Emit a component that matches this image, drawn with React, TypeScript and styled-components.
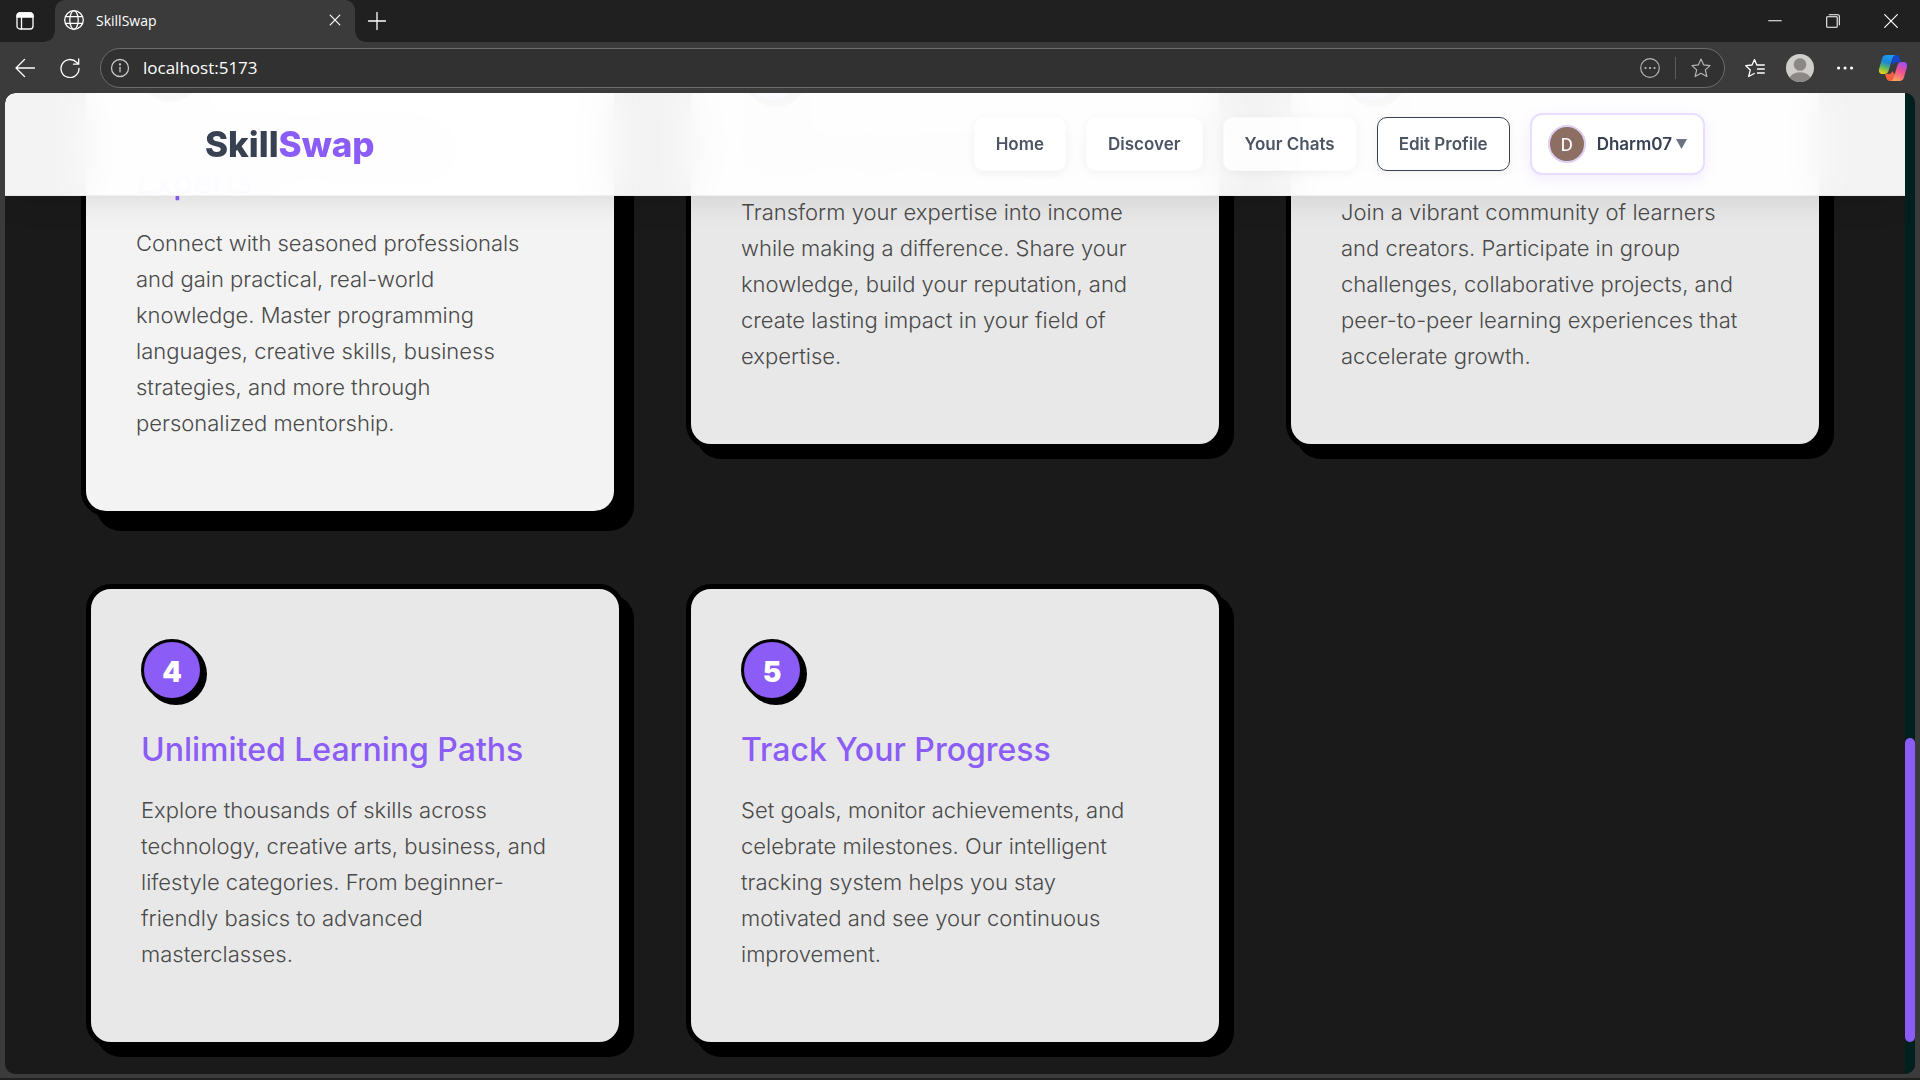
import React from "react";
import styled, { createGlobalStyle } from "styled-components";

const GlobalStyle = createGlobalStyle`
  *, *::before, *::after { box-sizing: border-box; }
  body { margin: 0; background: #3b3b3b; font-family: Inter, "Noto Sans", sans-serif; }
  h1, h2, h3, p { margin: 0; }
  button, input { font: inherit; color: inherit; }
  button { background: none; border: 0; padding: 0; cursor: pointer; }
`;

const Window = styled.div`
  display: flex;
  flex-direction: column;
  height: 100vh;
  overflow: hidden;
  background: #3b3b3b;
  border-bottom: 2px solid #202020;
`;

const TitleBar = styled.header`
  display: flex;
  flex: none;
  height: 42px;
  background: #202020;
  color: #fff;
`;

const ChromeButton = styled.button<{ $width: number }>`
  display: flex;
  flex: none;
  align-items: center;
  justify-content: center;
  width: ${(p) => p.$width}px;
  color: #fff;
`;

const Tab = styled.div`
  position: relative;
  display: flex;
  align-items: center;
  width: 300px;
  margin-left: 5px;
  padding: 0 10px 2px 9px;
  border-radius: 10px 10px 0 0;
  background: #3b3b3b;
  font: 400 14px "Open Sans", "Noto Sans", sans-serif;

  &::before, &::after {
    content: "";
    position: absolute;
    bottom: 0;
    width: 10px;
    height: 10px;
  }
  &::before {
    right: 100%;
    background: radial-gradient(circle at 0 0, #202020 9px, #3b3b3b 10px);
  }
  &::after {
    left: 100%;
    background: radial-gradient(circle at 100% 0, #202020 9px, #3b3b3b 10px);
  }
`;

const TabTitle = styled.span`
  flex: 1;
  padding-left: 12px;
`;

const WindowControls = styled.div`
  display: flex;
  margin-left: auto;
`;

const Toolbar = styled.div`
  display: flex;
  flex: none;
  align-items: center;
  height: 51px;
  padding: 0 9px 0 2px;
`;

const AddressBar = styled.label`
  display: flex;
  flex: 1;
  align-items: center;
  height: 40px;
  margin-left: 8px;
  padding: 0 3px 0 9px;
  border: 1px solid #6c6c6c;
  border-radius: 20px;
  background: #313131;
  color: #c6c6c6;

  button { color: #b4b4b4; }
`;

const AddressInput = styled.input`
  flex: 1;
  min-width: 0;
  padding: 0 0 0 13px;
  border: 0;
  outline: 0;
  background: transparent;
  color: #fff;
  font: 400 17px "Open Sans", "Noto Sans", sans-serif;
`;

const Divider = styled.span`
  width: 1px;
  height: 22px;
  margin: 0 5px;
  background: #5c5c5c;
`;

const Viewport = styled.div`
  display: flex;
  flex: 1;
  min-height: 0;
  margin: 0 5px 4px;
  border-radius: 10px;
  overflow: hidden;
  background: #1a1a1a;
`;

const Page = styled.div`
  position: relative;
  display: flex;
  flex: 1;
  flex-direction: column;
  justify-content: flex-end;
  min-width: 0;
  overflow: hidden;
`;

const ScrollTrack = styled.div`
  display: flex;
  flex: none;
  flex-direction: column;
  justify-content: flex-end;
  width: 10px;
  padding-bottom: 32px;
  background: #00201d;
`;

const ScrollThumb = styled.div`
  height: 32%;
  border-radius: 5px;
  background: #8b5cf6;
`;

const SiteHeader = styled.header`
  position: absolute;
  z-index: 2;
  top: 0;
  left: 0;
  right: 0;
  padding: 20px 0;
  border-bottom: 1px solid rgba(0, 0, 0, 0.05);
  background: rgba(255, 255, 255, 0.95);
  backdrop-filter: blur(20px);
  box-shadow: 0 4px 30px rgba(0, 0, 0, 0.1);
`;

const HeaderInner = styled.div`
  display: flex;
  align-items: center;
  justify-content: space-between;
  max-width: 1500px;
  margin: 0 auto;
`;

const Logo = styled.a`
  color: #374151;
  font-size: 35px;
  font-weight: 800;
  line-height: 44px;
  text-decoration: none;

  span { color: #8b5cf6; }
`;

const Nav = styled.nav`
  display: flex;
  align-items: center;
  gap: 20px;
`;

const NavLink = styled.a<{ $outlined?: boolean }>`
  padding: 15px 21px;
  border: 1px solid ${(p) => (p.$outlined ? "#374151" : "rgba(0, 0, 0, 0.01)")};
  border-radius: 10px;
  background: rgba(255, 255, 255, 0.8);
  box-shadow: 0 2px 10px rgba(0, 0, 0, 0.05);
  color: #4b5563;
  font-size: 17px;
  font-weight: 600;
  line-height: 22px;
  text-decoration: none;
`;

const ProfileButton = styled.button`
  display: flex;
  align-items: center;
  height: 62px;
  padding: 0 16px;
  border: 2px solid #e9deff;
  border-radius: 12px;
  background: #fff;
  box-shadow: 0 4px 15px rgba(139, 92, 246, 0.1);
  color: #374151;
  font-size: 17px;
  font-weight: 600;
`;

const Avatar = styled.span`
  display: flex;
  align-items: center;
  justify-content: center;
  width: 38px;
  height: 38px;
  margin-right: 11px;
  border: 2px solid #ddd0f5;
  border-radius: 50%;
  background: #8d6e63;
  color: #fff;
  font: 400 19px Roboto, sans-serif;
`;

const Caret = styled.svg`
  margin-left: 4px;
`;

const Grid = styled.main`
  display: grid;
  flex: none;
  grid-template-columns: repeat(3, 1fr);
  align-items: start;
  gap: 63px 62px;
  padding: 0 81px 27px;
`;

const Card = styled.article<{ $lifted?: boolean }>`
  margin: ${(p) => (p.$lifted ? "-5px 5px 5px -5px" : "0")};
  padding: 50px 50px 70px;
  border: 5px solid #000;
  border-radius: 25px;
  background: ${(p) => (p.$lifted ? "#f3f3f3" : "#e8e8e8")};
  box-shadow: ${(p) => (p.$lifted ? "15px 15px" : "10px 10px")} 0 #000;
`;

const Step = styled.div`
  display: flex;
  align-items: center;
  justify-content: center;
  width: 62px;
  height: 62px;
  margin-bottom: 31px;
  padding-top: 4px;
  border: 3px solid #000;
  border-radius: 50%;
  background: #8b5cf6;
  box-shadow: 4px 4px 0 #000;
  color: #fff;
  font-size: 28px;
  font-weight: 900;
  line-height: 36px;
`;

const CardTitle = styled.h2`
  margin-bottom: 24px;
  color: #8b5cf6;
  font-size: 32px;
  font-weight: 500;
  line-height: 36px;
  white-space: pre-line;
`;

const CardText = styled.p`
  color: #4a4a4a;
  font-size: 22px;
  font-weight: 300;
  line-height: 36px;
  white-space: pre-line;
`;

const cards = [
  {
    title: "Learn From Industry\nExperts",
    text: "Connect with seasoned professionals\nand gain practical, real-world\nknowledge. Master programming\nlanguages, creative skills, business\nstrategies, and more through\npersonalized mentorship.",
    lifted: true,
  },
  {
    title: "Share Your Knowledge",
    text: "Transform your expertise into income\nwhile making a difference. Share your\nknowledge, build your reputation, and\ncreate lasting impact in your field of\nexpertise.",
  },
  {
    title: "Community Learning",
    text: "Join a vibrant community of learners\nand creators. Participate in group\nchallenges, collaborative projects, and\npeer-to-peer learning experiences that\naccelerate growth.",
  },
  {
    title: "Unlimited Learning Paths",
    text: "Explore thousands of skills across\ntechnology, creative arts, business, and\nlifestyle categories. From beginner-\nfriendly basics to advanced\nmasterclasses.",
  },
  {
    title: "Track Your Progress",
    text: "Set goals, monitor achievements, and\ncelebrate milestones. Our intelligent\ntracking system helps you stay\nmotivated and see your continuous\nimprovement.",
  },
];

const links = [
  { label: "Home" },
  { label: "Discover" },
  { label: "Your Chats" },
  { label: "Edit Profile", outlined: true },
];

type IconProps = { size?: number; stroke?: number; children: React.ReactNode };
const Icon = ({ size = 20, stroke = 1.3, children }: IconProps) => (
  <svg width={size} height={size} viewBox="0 0 20 20" fill="none" stroke="currentColor" strokeWidth={stroke} strokeLinecap="round" strokeLinejoin="round" aria-hidden="true">
    {children}
  </svg>
);

const Copilot = () => (
  <svg width="30" height="28" viewBox="0 0 30 28" aria-hidden="true">
    <defs>
      <linearGradient id="cpBlue" x1="0.6" y1="0" x2="0.3" y2="1">
        <stop offset="0" stopColor="#1b9cf0" />
        <stop offset="0.4" stopColor="#1d86d8" />
        <stop offset="0.7" stopColor="#62bb5a" />
        <stop offset="1" stopColor="#f2cf1d" />
      </linearGradient>
      <linearGradient id="cpPink" x1="0.7" y1="0" x2="0.3" y2="1">
        <stop offset="0" stopColor="#a04df0" />
        <stop offset="0.45" stopColor="#ee5091" />
        <stop offset="1" stopColor="#ffa45c" />
      </linearGradient>
    </defs>
    <path d="M15 1h3.500c1.500 0 2.500 1 3 2.500L23 8h-3.500c-2 0-3.200 1-3.800 3L13 7z" fill="#1846c8" />
    <path d="M15 27h-3.500c-1.500 0-2.500-1-3-2.500L7 20h3.500c2 0 3.200-1 3.800-3L17 21z" fill="#f2603d" />
    <path d="M8.500 1h9c-1.700.3-2.600 1.500-3.200 3.500l-3.800 12.500c-.6 2-1.800 3-4 3H4.500C1.300 20 .4 17.500 1.200 14.500L4 4.800C4.800 2.200 6.200 1 8.500 1z" fill="url(#cpBlue)" />
    <path d="M21.500 27h-9c1.700-.3 2.600-1.500 3.200-3.500L19.500 11c.6-2 1.800-3 4-3h2c3.200 0 4.100 2.500 3.300 5.500L26 23.200c-.8 2.600-2.200 3.800-4.500 3.800z" fill="url(#cpPink)" />
  </svg>
);

const starPath = "M10 1l2.700 5.900 6.300.7-4.700 4.300 1.600 6.600L10 15.300 4.100 18.500l1.600-6.600L1 7.600l6.300-.7z";

export default function App() {
  return (
    <>
      <GlobalStyle />
      <Window>
        <TitleBar>
          <ChromeButton $width={50} aria-label="Tab actions">
            <Icon>
              <rect x="2" y="2" width="16" height="16" rx="3" />
              <path d="M2 5c0-2 1-3 3-3h10c2 0 3 1 3 3v1H2z" fill="currentColor" />
              <path d="M6.500 6v12" />
            </Icon>
          </ChromeButton>
          <Tab>
            <Icon>
              <circle cx="10" cy="10" r="9.300" />
              <ellipse cx="10" cy="10" rx="4.200" ry="9.300" />
              <path d="M1.500 6.700h17M1.500 13.300h17" />
            </Icon>
            <TabTitle>SkillSwap</TabTitle>
            <ChromeButton $width={20} aria-label="Close tab">
              <Icon size={12} stroke={2}><path d="M2 2l16 16M18 2L2 18" /></Icon>
            </ChromeButton>
          </Tab>
          <ChromeButton $width={44} aria-label="New tab">
            <Icon size={20}><path d="M10 1.500v17M1.500 10h17" /></Icon>
          </ChromeButton>
          <WindowControls>
            <ChromeButton $width={58} aria-label="Minimize">
              <Icon size={14} stroke={1.5}><path d="M1 9.500h18" /></Icon>
            </ChromeButton>
            <ChromeButton $width={58} aria-label="Restore">
              <Icon size={14} stroke={1.5}>
                <rect x="1" y="4" width="15" height="15" rx="1" />
                <path d="M4.500 1H17c1.300 0 2 .7 2 2v12.500" />
              </Icon>
            </ChromeButton>
            <ChromeButton $width={58} aria-label="Close">
              <Icon size={14} stroke={1.7}><path d="M1 1l18 18M19 1L1 19" /></Icon>
            </ChromeButton>
          </WindowControls>
        </TitleBar>

        <Toolbar>
          <ChromeButton $width={45} aria-label="Back">
            <Icon><path d="M19.500 10H1M9.500 1.500L1 10l8.500 8.500" /></Icon>
          </ChromeButton>
          <ChromeButton $width={45} aria-label="Refresh">
            <Icon><path d="M19 10.500A9 9 0 1 1 16.500 4.300L18.500 6M18.700 1v5.200h-5.200" /></Icon>
          </ChromeButton>
          <AddressBar>
            <Icon>
              <circle cx="10" cy="10" r="8.500" />
              <path d="M10 9.300v4.500" />
              <circle cx="10" cy="6.500" r="0.500" fill="currentColor" />
            </Icon>
            <AddressInput aria-label="Address" defaultValue="localhost:5173" />
            <ChromeButton $width={40} aria-label="Page options">
              <Icon stroke={1.2}>
                <circle cx="10" cy="10" r="9.300" />
                <path d="M5.500 10h.1M10 10h.1M14.500 10h.1" strokeWidth="2.200" />
              </Icon>
            </ChromeButton>
            <Divider />
            <ChromeButton $width={40} aria-label="Add to favorites">
              <Icon stroke={1.2}><path d={starPath} /></Icon>
            </ChromeButton>
          </AddressBar>
          <ChromeButton $width={60} aria-label="Favorites">
            <Icon>
              <path d="M19.300 7h-7.500L9.500 1.500 7 7l-6.200.7 4.500 4.200-1.600 6.600 5.500-3M12.500 11h6.800M12.500 15h6.800" />
            </Icon>
          </ChromeButton>
          <ChromeButton $width={30} aria-label="Account">
            <svg width="28" height="28" viewBox="0 0 28 28" aria-hidden="true">
              <clipPath id="account"><circle cx="14" cy="14" r="14" /></clipPath>
              <g clipPath="url(#account)">
                <rect width="28" height="28" fill="#d0cecb" />
                <circle cx="14" cy="10.500" r="6.300" fill="#8b8886" />
                <ellipse cx="14" cy="26" rx="11" ry="7.800" fill="#8b8886" />
              </g>
            </svg>
          </ChromeButton>
          <ChromeButton $width={60} aria-label="Settings and more">
            <Icon><path d="M3.500 10h.1M10 10h.1M16.500 10h.1" strokeWidth="3" /></Icon>
          </ChromeButton>
          <ChromeButton $width={36} aria-label="Copilot"><Copilot /></ChromeButton>
        </Toolbar>

        <Viewport>
          <Page>
            <SiteHeader>
              <HeaderInner>
                <Logo href="#">Skill<span>Swap</span></Logo>
                <Nav>
                  {links.map((l) => (
                    <NavLink key={l.label} href="#" $outlined={l.outlined}>{l.label}</NavLink>
                  ))}
                  <ProfileButton>
                    <Avatar>D</Avatar>
                    Dharm07
                    <Caret width="11" height="10" viewBox="0 0 11 10" aria-hidden="true">
                      <path d="M0 0h11L5.500 10z" fill="#6b7280" />
                    </Caret>
                  </ProfileButton>
                </Nav>
              </HeaderInner>
            </SiteHeader>
            <Grid>
              {cards.map((c, i) => (
                <Card key={c.title} $lifted={c.lifted}>
                  <Step>{i + 1}</Step>
                  <CardTitle>{c.title}</CardTitle>
                  <CardText>{c.text}</CardText>
                </Card>
              ))}
            </Grid>
          </Page>
          <ScrollTrack><ScrollThumb /></ScrollTrack>
        </Viewport>
      </Window>
    </>
  );
}
